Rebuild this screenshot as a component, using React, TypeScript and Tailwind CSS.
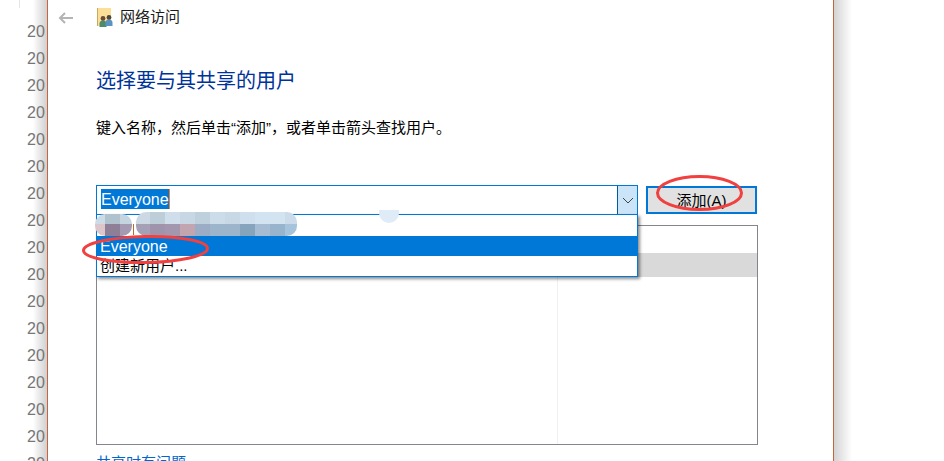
const rows = Array.from({ length: 17 }, (_, i) => i);

const blobA = [
  ['#ccdbe6', '#dcc6cc', 0, 10],
  ['#b0c2cd', '#8f7f96', 10, 15],
  ['#c5d5e0', '#a49ab2', 25, 12],
];

const blobB = [
  ['#ccd9e5', '#a5a0b5'],
  ['#bdced9', '#a094ad'],
  ['#cfdeea', '#a396af'],
  ['#c8d7e4', '#c3a5b0'],
  ['#bdd0dc', '#9cacc4'],
  ['#ccdce9', '#9db5ca'],
  ['#c8d8e5', '#9db5ca'],
  ['#cfdfed', '#86a4bb'],
  ['#d2e3f1', '#a5bcd3'],
  ['#d3e3ef', '#98b4cc'],
  ['#cbdbe9', '#a6c3dc'],
];

function ArrowBack() {
  return (
    <svg width="15" height="12" viewBox="0 0 15 12" fill="none" stroke="#b4b4b4" strokeWidth="2">
      <path d="M15 6H2M7 1L2 6l5 5" />
    </svg>
  );
}

function NetworkIcon() {
  return (
    <svg width="16" height="19" viewBox="0 0 16 19">
      <rect x="0" y="0" width="14" height="18" fill="#fbdf98" />
      <rect x="0" y="0" width="1" height="18" fill="#c9a860" />
      <circle cx="6" cy="10.5" r="2.4" fill="#6b4a38" />
      <path d="M2.5 19v-3.5c0-2 1.6-3 3.5-3s3.5 1 3.5 3V19z" fill="#4f8a6c" />
      <circle cx="12" cy="9.5" r="2.4" fill="#50463e" />
      <path d="M8.5 18v-3.5c0-2 1.6-3 3.5-3s3.5 1 3.5 3V18z" fill="#5a93bf" />
    </svg>
  );
}

function Mosaic() {
  return (
    <svg className="absolute left-[95px] top-[210px]" width="305" height="28" viewBox="0 0 305 28">
      <defs>
        <clipPath id="blur-a">
          <rect x="0" y="4" width="37" height="22" rx="10" />
          <rect x="41" y="2" width="161" height="24" rx="10" />
        </clipPath>
      </defs>
      <rect x="38" y="14" width="1" height="11" fill="#b86a30" />
      <g clipPath="url(#blur-a)">
        {blobA.map(([top, bottom, x, w]) => (
          <g key={x as number}>
            <rect x={x as number} y="2" width={w as number} height="12" fill={top as string} />
            <rect x={x as number} y="14" width={w as number} height="12" fill={bottom as string} />
          </g>
        ))}
        {blobB.map(([top, bottom], i) => (
          <g key={i}>
            <rect x={40 + i * 15} y="2" width="15" height="12" fill={top} />
            <rect x={40 + i * 15} y="14" width="15" height="12" fill={bottom} />
          </g>
        ))}
      </g>
      <path d="M284 0h20v3a10 10 0 0 1-20 0z" fill="#dfebf6" />
    </svg>
  );
}

function Marks() {
  return (
    <>
      <svg className="absolute left-[80px] top-[232px]" width="132" height="36" viewBox="0 0 132 36" fill="none">
        <ellipse cx="65.5" cy="17.5" rx="62" ry="13" stroke="#f0403f" strokeWidth="3" transform="rotate(-1 65.5 17.5)" />
      </svg>
      <svg className="absolute left-[654px] top-[172px]" width="92" height="42" viewBox="0 0 92 42" fill="none">
        <ellipse cx="45.5" cy="21" rx="42" ry="16.5" stroke="#f0403f" strokeWidth="3" />
      </svg>
    </>
  );
}

export default function App() {
  return (
    <div className="relative flex h-[461px] w-[944px] overflow-hidden bg-white font-['Liberation_Sans','Noto_Sans_CJK_SC',sans-serif]">
      <div className="relative w-[47px] shrink-0 overflow-hidden bg-gradient-to-r from-white from-70% to-[#d0d0d0]">
        <div className="absolute left-[19px] top-0 h-[8px] w-px bg-[#e4e4e4]" />
        <div className="flex flex-col pl-[27px] pt-[22px]">
          {rows.map((i) => (
            <div key={i} className="h-[27px] text-[16px] leading-[20px] text-[#767676]">20</div>
          ))}
        </div>
      </div>

      <div className="w-[787px] shrink-0 border-x border-[#c8643c] bg-white">
        <div className="flex h-[35px] items-center">
          <div className="ml-[10px] flex w-[39px]"><ArrowBack /></div>
          <NetworkIcon />
          <span className="mb-[3px] ml-[7px] text-[15px] leading-none text-[#1a1a1a]">网络访问</span>
        </div>
        <div className="pl-[48px] pr-[76px]">
          <h1 className="mt-[34px] text-[20px] leading-[24px] text-[#003399]">选择要与其共享的用户</h1>
          <p className="mt-[25px] text-[15px] leading-[20px] text-black">键入名称，然后单击“添加”，或者单击箭头查找用户。</p>

          <div className="mt-[47px] flex items-center">
            <div className="flex h-[30px] w-[542px] items-stretch border border-[#0078d7] bg-white">
              <div className="flex flex-1 items-center pl-[4px]">
                <span className="mb-[2px] inline-block h-[20px] border-r border-[#f08030] bg-[#0078d7] text-[16px] leading-[22px] text-white">Everyone</span>
              </div>
              <div className="flex w-[20px] items-center justify-center border-l border-[#005a9e] bg-[#cce4f7]">
                <svg width="12" height="7" viewBox="0 0 12 7" fill="none" stroke="#444" strokeWidth="1">
                  <path d="M1 1l5 5 5-5" />
                </svg>
              </div>
            </div>
            <button className="ml-[8px] flex h-[28px] w-[111px] items-center justify-center border-2 border-[#0078d7] bg-[#e1e1e1] pt-[2px] text-[15px] text-black">添加(A)</button>
          </div>

          <div className="mt-[10px] flex h-[220px] w-[662px] border border-[#83868f] bg-white">
            <div className="w-[461px] border-r border-[#eef2f6]">
              <div className="mt-[27px] h-[24px] bg-[#d9d9d9]" />
            </div>
            <div className="flex-1">
              <div className="mt-[27px] h-[24px] bg-[#d9d9d9]" />
            </div>
          </div>

          <a className="mt-[8px] block text-[15px] leading-[20px] text-[#0066cc]">共享时有问题</a>
        </div>
      </div>

      <div className="h-full w-[18px] shrink-0 bg-gradient-to-r from-[#d4d4d4] to-white" />

      <div className="absolute left-[96px] top-[214px] flex h-[63px] w-[542px] flex-col border border-[#0078d7] bg-white shadow-[2px_2px_3px_rgba(0,0,0,0.45)]">
        <div className="h-[21px]" />
        <div className="h-[20px] bg-[#0078d7] pl-[3px] text-[16px] leading-[22px] text-white">Everyone</div>
        <div className="pl-[3px] text-[15px] leading-[20px] text-black">创建新用户...</div>
      </div>

      <Mosaic />
      <Marks />
    </div>
  );
}
